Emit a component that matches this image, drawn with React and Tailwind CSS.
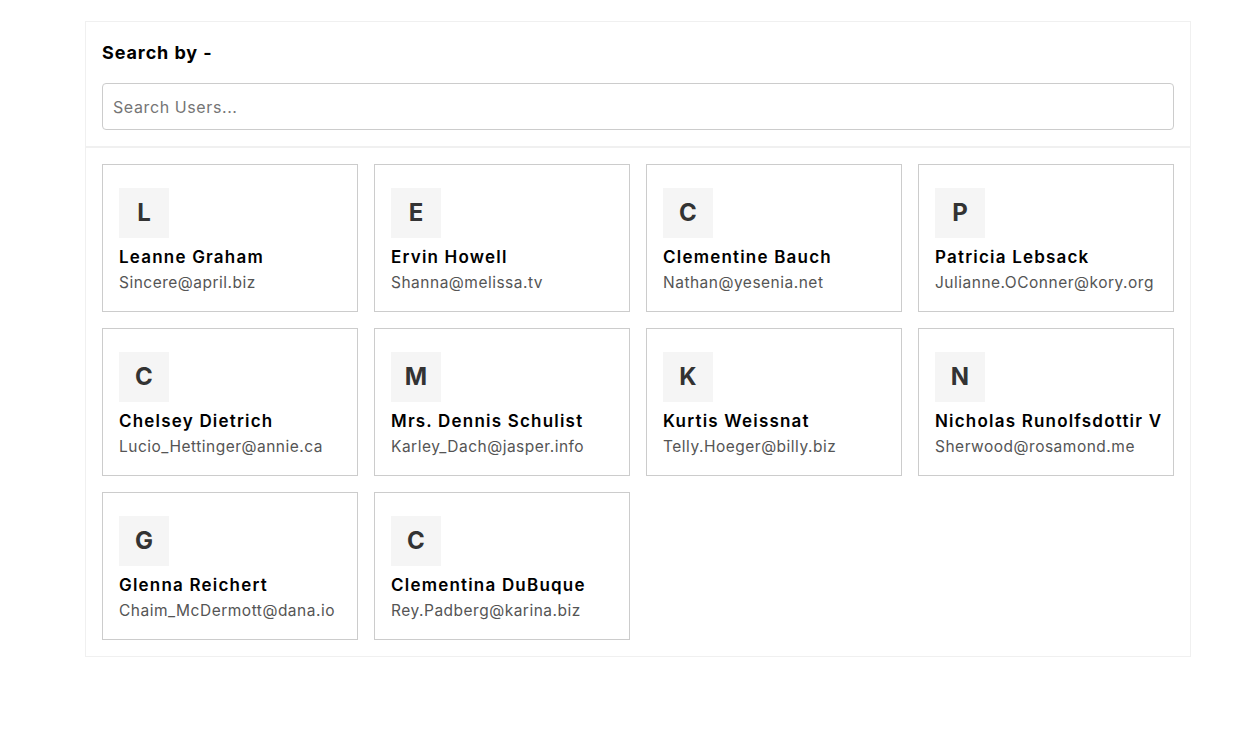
const users = [
  ["Leanne Graham", "Sincere@april.biz"],
  ["Ervin Howell", "Shanna@melissa.tv"],
  ["Clementine Bauch", "Nathan@yesenia.net"],
  ["Patricia Lebsack", "Julianne.OConner@kory.org"],
  ["Chelsey Dietrich", "Lucio_Hettinger@annie.ca"],
  ["Mrs. Dennis Schulist", "Karley_Dach@jasper.info"],
  ["Kurtis Weissnat", "Telly.Hoeger@billy.biz"],
  ["Nicholas Runolfsdottir V", "Sherwood@rosamond.me"],
  ["Glenna Reichert", "Chaim_McDermott@dana.io"],
  ["Clementina DuBuque", "Rey.Padberg@karina.biz"],
];

export default function App() {
  return (
    <div className="min-h-[743px] bg-white pt-[21px]" style={{ fontFamily: "Inter, 'Noto Sans', sans-serif" }}>
      <div className="ml-[85px] w-[1106px] border border-[#f0f0f0]">
        <div className="px-4 pt-[17px] pb-4 border-b-2 border-[#f0f0f0]">
          <h2 className="text-[18px] font-bold text-black leading-[28px] tracking-[0.9px]">Search by -</h2>
          <input
            className="mt-[16px] block w-full h-[47px] rounded-[4px] border border-[#cccccc] px-[10px] text-[16px] tracking-[0.6px] text-[#333] placeholder:text-[#757575] outline-none"
            placeholder="Search Users..."
          />
        </div>
        <div className="grid grid-cols-4 gap-4 p-4">
          {users.map(([name, email]) => (
            <div key={name} className="h-[148px] border border-[#cccccc] px-4 pt-[23px]">
              <div className="w-[50px] h-[50px] bg-[#f5f5f5] flex items-center justify-center text-[24px] font-bold text-[#333]">
                {name.startsWith("Mrs.") ? "M" : name[0]}
              </div>
              <div className="mt-[8px] text-[17px] font-semibold text-black leading-[22px] tracking-[1.2px] whitespace-nowrap">{name}</div>
              <div className="mt-[4px] text-[15.5px] text-[#555] leading-[22px] tracking-[0.5px] whitespace-nowrap">{email}</div>
            </div>
          ))}
        </div>
      </div>
    </div>
  );
}
